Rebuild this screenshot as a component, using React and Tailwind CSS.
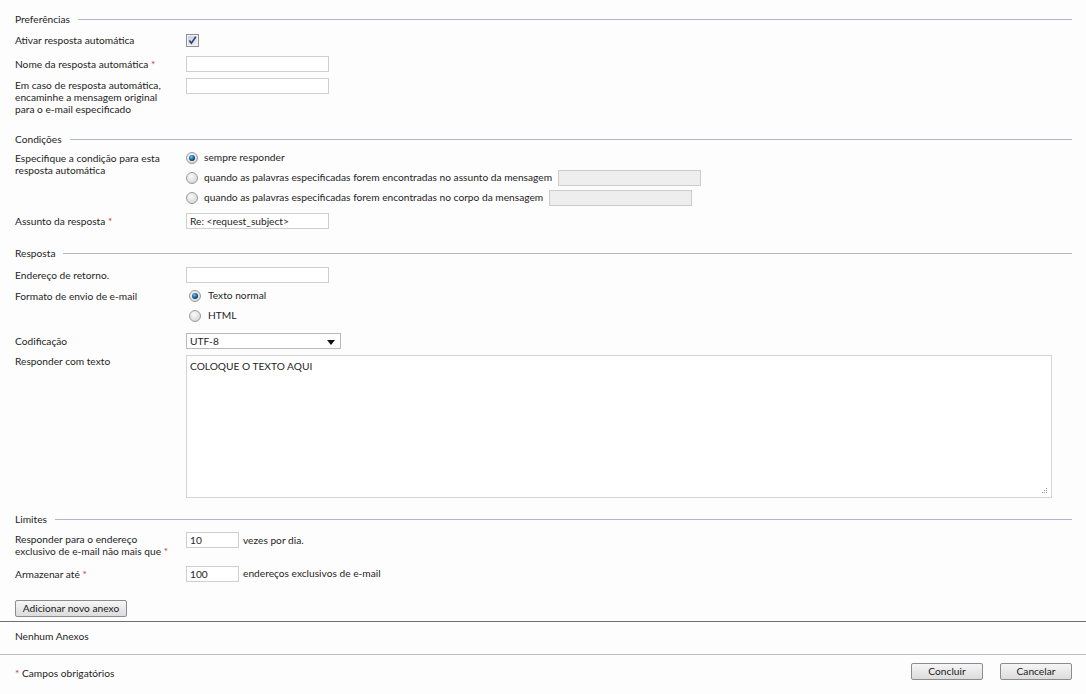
import React from 'react';

const Req = () => <span className="text-[#d0342c]"> *</span>;

const SectionHeader = ({ title, className = '' }) => (
    <div className={`flex items-center h-[14px] pr-[14px] ${className}`}>
        <span className="leading-[14px] mr-[8px]">{title}</span>
        <div className="flex-1 h-px bg-[#b3b8c6]" />
    </div>
);

const TextBox = ({ value = '', className = 'w-[143px]', disabled = false }) => (
    <div
        className={`h-[16px] border px-[3px] leading-[14px] ${className} ${
            disabled ? 'bg-[#eeeeee] border-[#cccccc]' : 'bg-white border-[#cfcfcf]'
        }`}
    >
        {value}
    </div>
);

const Radio = ({ checked }) => (
    <svg width="12" height="12" viewBox="0 0 12 12" className="shrink-0">
        <defs>
            <radialGradient id="rg-off" cx="0.4" cy="0.35" r="0.7">
                <stop offset="0" stopColor="#fafafa" />
                <stop offset="1" stopColor="#d4d4d4" />
            </radialGradient>
            <radialGradient id="rg-on" cx="0.4" cy="0.35" r="0.6">
                <stop offset="0" stopColor="#7fc3ea" />
                <stop offset="0.6" stopColor="#1f6fa6" />
                <stop offset="1" stopColor="#0d3f63" />
            </radialGradient>
        </defs>
        <circle cx="6" cy="6" r="5.5" fill="url(#rg-off)" stroke="#9b9b9b" strokeWidth="1" />
        {checked && <circle cx="6" cy="6" r="3" fill="url(#rg-on)" />}
    </svg>
);

const Checkbox = () => (
    <svg width="13" height="13" viewBox="0 0 13 13">
        <defs>
            <linearGradient id="cb-bg" x1="0" y1="0" x2="1" y2="1">
                <stop offset="0" stopColor="#c9cfdc" />
                <stop offset="1" stopColor="#eef0f5" />
            </linearGradient>
        </defs>
        <rect x="0.5" y="0.5" width="12" height="12" fill="#f4f4f4" stroke="#8f8f8f" />
        <rect x="2" y="2" width="9" height="9" fill="url(#cb-bg)" />
        <path d="M3.4 6.6 L5.4 9.2 L9.8 2.8" fill="none" stroke="#2a3f7c" strokeWidth="1.6" />
    </svg>
);

const Button = ({ children, className = '' }) => (
    <button
        type="button"
        className={`h-[17px] border border-[#8c8c8c] rounded-[2px] bg-gradient-to-b from-[#f6f6f6] to-[#dcdcdc] leading-[15px] text-[#1a1a1a] ${className}`}
    >
        {children}
    </button>
);

const App = () => {
    return (
        <div className="min-h-[694px] w-[1086px] bg-[#fdfdfd] text-[#1e1e1e] text-[10.2px] font-['Lato','Liberation_Sans',sans-serif] overflow-hidden">
            <div className="pl-[15px]">
                {/* Preferências */}
                <SectionHeader title="Preferências" className="mt-[12px]" />

                <div className="flex items-center h-[14px] mt-[7px]">
                    <div className="w-[171px] leading-[14px]">Ativar resposta automática</div>
                    <Checkbox />
                </div>

                <div className="flex items-center h-[16px] mt-[9px]">
                    <div className="w-[171px] leading-[12px] pb-[1px]">
                        Nome da resposta automática<Req />
                    </div>
                    <TextBox />
                </div>

                <div className="flex items-start mt-[6px]">
                    <div className="w-[171px] leading-[12px] pt-[1px]">
                        Em caso de resposta automática,
                        <br />
                        encaminhe a mensagem original
                        <br />
                        para o e-mail especificado
                    </div>
                    <TextBox />
                </div>

                {/* Condições */}
                <SectionHeader title="Condições" className="mt-[17px]" />

                <div className="flex items-start mt-[2px]">
                    <div className="w-[171px] leading-[12px] pt-[4px]">
                        Especifique a condição para esta
                        <br />
                        resposta automática
                    </div>
                    <div className="flex flex-col">
                        <div className="flex items-center h-[20px] gap-[6px]">
                            <Radio checked />
                            <span>sempre responder</span>
                        </div>
                        <div className="flex items-center h-[20px] gap-[6px]">
                            <Radio />
                            <span>quando as palavras especificadas forem encontradas no assunto da mensagem</span>
                            <TextBox disabled />
                        </div>
                        <div className="flex items-center h-[20px] gap-[6px]">
                            <Radio />
                            <span>quando as palavras especificadas forem encontradas no corpo da mensagem</span>
                            <TextBox disabled />
                        </div>
                    </div>
                </div>

                <div className="flex items-center h-[16px] mt-[5px]">
                    <div className="w-[171px] leading-[12px]">
                        Assunto da resposta<Req />
                    </div>
                    <TextBox value="Re: <request_subject>" />
                </div>

                {/* Resposta */}
                <SectionHeader title="Resposta" className="mt-[17px]" />

                <div className="flex items-center h-[16px] mt-[7px]">
                    <div className="w-[171px] leading-[12px]">Endereço de retorno.</div>
                    <TextBox />
                </div>

                <div className="flex items-start mt-[3px]">
                    <div className="w-[171px] leading-[12px] pt-[4px]">Formato de envio de e-mail</div>
                    <div className="flex flex-col">
                        <div className="flex items-center h-[20px] gap-[7px] pl-[3px]">
                            <Radio checked />
                            <span>Texto normal</span>
                        </div>
                        <div className="flex items-center h-[20px] gap-[7px] pl-[3px]">
                            <Radio />
                            <span>HTML</span>
                        </div>
                    </div>
                </div>

                <div className="flex items-center h-[16px] mt-[7px]">
                    <div className="w-[171px] leading-[12px]">Codificação</div>
                    <div className="w-[155px] h-[16px] border border-[#b9b9b9] bg-white flex items-center justify-between px-[3px]">
                        <span className="leading-[14px]">UTF-8</span>
                        <svg width="8" height="5" viewBox="0 0 8 5" className="mr-[2px] mt-[2px]">
                            <path d="M0 0 H8 L4 5 Z" fill="#111" />
                        </svg>
                    </div>
                </div>

                <div className="flex items-start mt-[6px]">
                    <div className="w-[171px] leading-[12px]">Responder com texto</div>
                    <div className="relative w-[866px] h-[143px] border border-[#d4d4d4] bg-white px-[3px] pt-[4px] leading-[12px]">
                        COLOQUE O TEXTO AQUI
                        <svg width="8" height="8" viewBox="0 0 8 8" className="absolute right-[3px] bottom-[3px]">
                            <rect x="6" y="2" width="1" height="1" fill="#9a9a9a" />
                            <rect x="4" y="4" width="1" height="1" fill="#9a9a9a" />
                            <rect x="6" y="4" width="1" height="1" fill="#9a9a9a" />
                            <rect x="2" y="6" width="1" height="1" fill="#9a9a9a" />
                            <rect x="4" y="6" width="1" height="1" fill="#9a9a9a" />
                            <rect x="6" y="6" width="1" height="1" fill="#9a9a9a" />
                        </svg>
                    </div>
                </div>

                {/* Limites */}
                <SectionHeader title="Limites" className="mt-[14px]" />

                <div className="flex items-start mt-[6px]">
                    <div className="w-[171px] leading-[12px] pt-[1px]">
                        Responder para o endereço
                        <br />
                        exclusivo de e-mail não mais que<Req />
                    </div>
                    <TextBox value="10" className="w-[53px]" />
                    <span className="ml-[4px] leading-[16px]">vezes por dia.</span>
                </div>

                <div className="flex items-center h-[16px] mt-[9px]">
                    <div className="w-[171px] leading-[12px]">
                        Armazenar até<Req />
                    </div>
                    <TextBox value="100" className="w-[53px]" />
                    <span className="ml-[4px]">endereços exclusivos de e-mail</span>
                </div>

                <Button className="mt-[18px] w-[112px]">Adicionar novo anexo</Button>
            </div>

            <div className="mt-[4px] h-px bg-[#6f6f6f]" />
            <div className="pl-[15px] mt-[8px] leading-[12px]">Nenhum Anexos</div>
            <div className="mt-[12px] h-px bg-[#b9bcc2]" />

            <div className="flex items-center h-[17px] mt-[8px] pl-[15px] pr-[14px]">
                <div className="flex-1 leading-[12px] pt-[3px]">
                    <span className="text-[#d0342c]">*</span> Campos obrigatórios
                </div>
                <Button className="w-[72px]">Concluir</Button>
                <Button className="w-[72px] ml-[17px]">Cancelar</Button>
            </div>
        </div>
    );
};

export default App;
